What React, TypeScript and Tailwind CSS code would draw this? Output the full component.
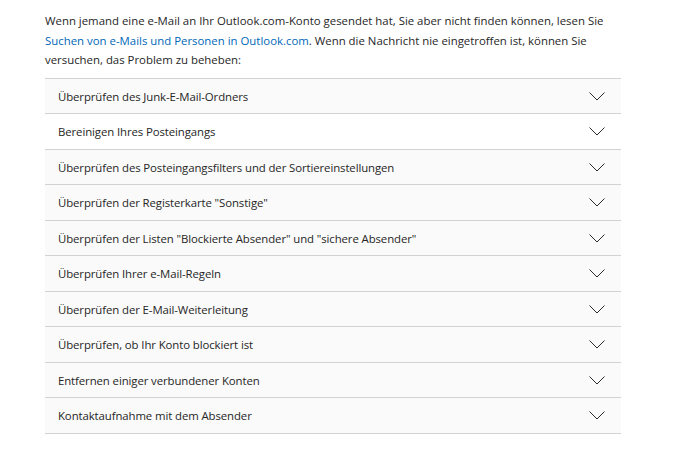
import React from "react";

const items = [
  "Überprüfen des Junk-E-Mail-Ordners",
  "Bereinigen Ihres Posteingangs",
  "Überprüfen des Posteingangsfilters und der Sortiereinstellungen",
  "Überprüfen der Registerkarte \"Sonstige\"",
  "Überprüfen der Listen \"Blockierte Absender\" und \"sichere Absender\"",
  "Überprüfen Ihrer e-Mail-Regeln",
  "Überprüfen der E-Mail-Weiterleitung",
  "Überprüfen, ob Ihr Konto blockiert ist",
  "Entfernen einiger verbundener Konten",
  "Kontaktaufnahme mit dem Absender",
];

function Chevron() {
  return (
    <svg width="16" height="9" viewBox="0 0 16 9" fill="none">
      <polyline points="0.5,0.5 8,8 15.5,0.5" stroke="#2b2b2b" strokeWidth="1" />
    </svg>
  );
}

export default function App() {
  return (
    <div className="w-[686px] h-[457px] bg-white text-[#262626]" style={{ fontFamily: '"Open Sans", "Noto Sans", sans-serif' }}>
      <div className="pl-[45px] pt-[11px] w-[621px]">
        <p className="text-[11.4px] leading-[19.6px] whitespace-nowrap">
          Wenn jemand eine e-Mail an Ihr Outlook.com-Konto gesendet hat, Sie aber nicht finden können, lesen Sie
          <br />
          <span className="text-[#0067b8]">Suchen von e-Mails und Personen in Outlook.com</span>. Wenn die Nachricht nie eingetroffen ist, können Sie
          <br />
          versuchen, das Problem zu beheben:
        </p>
        <div className="mt-[8px] border-t border-[#d2d2d2]">
          {items.map((t, i) => (
            <div
              key={i}
              className={`h-[35.5px] flex items-center justify-between border-b border-[#d2d2d2] pl-[13px] pr-[16px] ${i === 1 ? "bg-white" : "bg-[#fafafa]"}`}
            >
              <span className="text-[11.4px] tracking-[-0.1px] whitespace-nowrap pt-[1px]">{t}</span>
              <Chevron />
            </div>
          ))}
        </div>
      </div>
    </div>
  );
}
